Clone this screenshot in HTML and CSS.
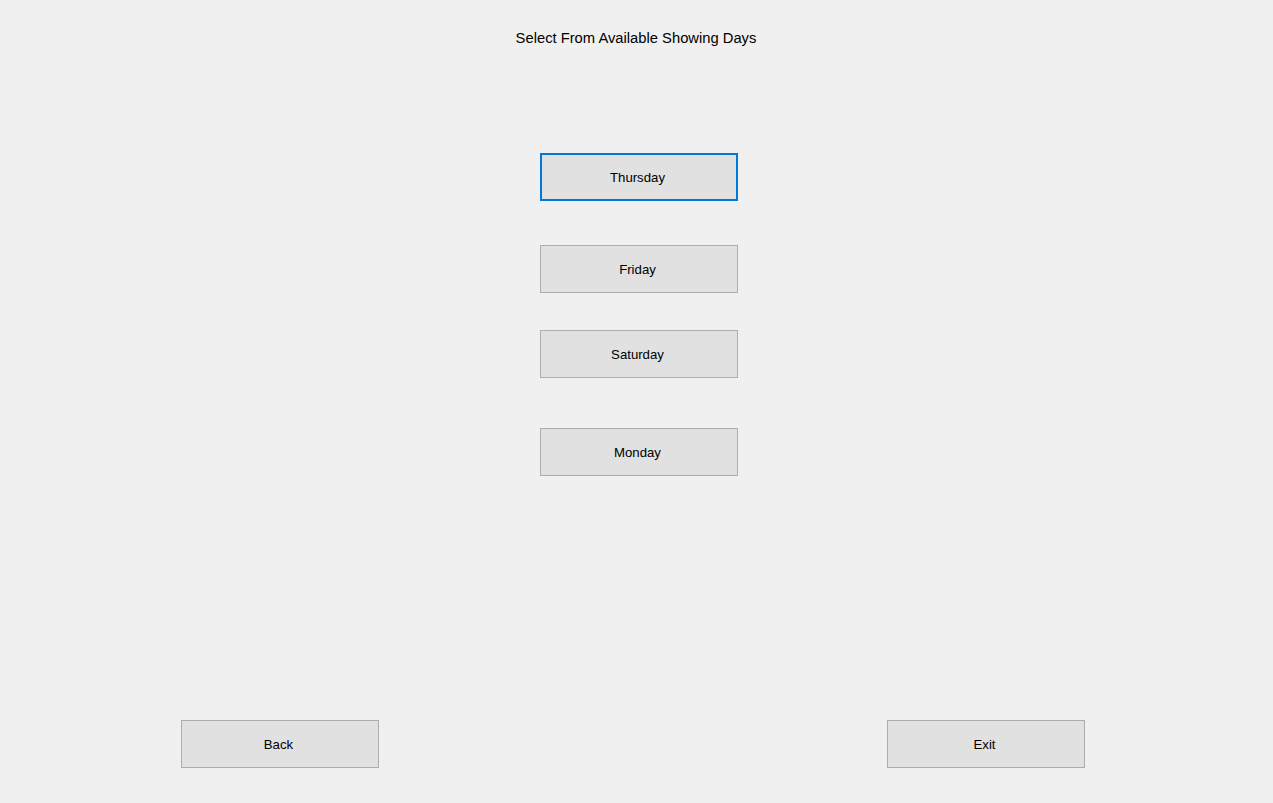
FILE: index.html
```html
<!DOCTYPE html>
<html>
<head>
<meta charset="utf-8">
<link rel="stylesheet" href="styles.css">
</head>
<body>
<div class="form">
  <div class="title">Select From Available Showing Days</div>
  <div class="days">
    <button class="btn focused d-thu">Thursday</button>
    <button class="btn d-fri">Friday</button>
    <button class="btn d-sat">Saturday</button>
    <button class="btn d-mon">Monday</button>
  </div>
  <div class="footer">
    <button class="btn">Back</button>
    <button class="btn exit">Exit</button>
  </div>
</div>
</body>
</html>
```
FILE: styles.css
```css
html, body {
  margin: 0;
  padding: 0;
  background: #f0f0f0;
}
body {
  font-family: "Liberation Sans", Arial, sans-serif;
  color: #000;
}
.form {
  width: 1273px;
  height: 803px;
  display: flex;
  flex-direction: column;
  box-sizing: border-box;
  padding-top: 28px;
  padding-bottom: 35px;
}
.title {
  text-align: center;
  font-size: 14.75px;
  line-height: 20px;
  height: 20px;
  padding-right: 1px;
}
.days {
  display: flex;
  flex-direction: column;
  align-items: flex-start;
  padding-left: 540px;
}
.btn {
  width: 198px;
  height: 48px;
  box-sizing: border-box;
  background: #e1e1e1;
  border: 1px solid #adadad;
  font-family: "Liberation Sans", Arial, sans-serif;
  font-size: 13.2px;
  color: #000;
  padding: 0 3px 0 0;
  margin: 0;
  display: flex;
  align-items: center;
  justify-content: center;
}
.btn.focused {
  border: 2px solid #0078d7;
}
.d-thu { margin-top: 105px; }
.d-fri { margin-top: 44px; }
.d-sat { margin-top: 37px; }
.d-mon { margin-top: 50px; }
.footer {
  margin-top: auto;
  display: flex;
  padding-left: 181px;
}
.exit {
  margin-left: 508px;
}
```
